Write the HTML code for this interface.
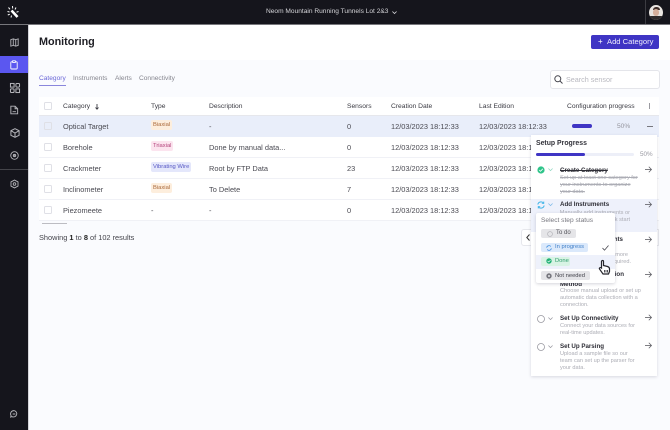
<!DOCTYPE html>
<html><head><meta charset="utf-8">
<style>
html,body{margin:0;padding:0;width:670px;height:430px;overflow:hidden;background:#fafbfe;font-family:"Liberation Sans",sans-serif;color:#3c3c44}
*{box-sizing:border-box}
#w{position:absolute;left:0;top:0;width:670px;height:430px;overflow:hidden;filter:blur(.3px)}
.a{position:absolute;white-space:nowrap}
.t{position:absolute;white-space:nowrap;font-size:7.4px;line-height:10px;color:#4a4a52}
.h{position:absolute;white-space:nowrap;font-size:6.7px;line-height:10px;color:#3a3a42}
.row{position:absolute;left:39px;width:620px;height:21px;background:#fff;border-bottom:1px solid #f0f1f6}
.cb{position:absolute;left:44px;width:8px;height:8px;border:1px solid #dfe0e6;border-radius:1.5px;background:#fff}
.tag{position:absolute;height:10px;line-height:10px;font-size:5.8px;padding:0 2px;border-radius:2px;white-space:nowrap}
.bi{background:#fdeedd;color:#a9683a}.tr{background:#fce4ef;color:#b3447c}.vw{background:#e4e7fb;color:#5657c4}
.st{position:absolute;white-space:nowrap;font-size:6.2px;line-height:9px;font-weight:bold;color:#2e2e36}
.sd{position:absolute;white-space:nowrap;font-size:5.6px;line-height:7px;color:#acadb5}
svg{position:absolute;overflow:visible}
</style></head><body><div id="w">

<div class="a" style="left:0;top:0;width:670px;height:24px;background:#15151c"></div>
<div class="a" style="left:0;top:24px;width:670px;height:1px;background:#77777c"></div>
<div class="a" style="left:0;top:25px;width:28px;height:405px;background:#15151c"></div>
<div class="a" style="left:28px;top:25px;width:1px;height:405px;background:#d5d5da"></div>
<div class="a" style="left:29px;top:25px;width:641px;height:35px;background:#fff"></div>
<div class="a" style="left:0;top:56px;width:28px;height:17px;background:#5b57f0"></div>
<div class="a" style="left:0;top:169px;width:28px;height:1px;background:#44444a"></div>
<div class="a" style="left:645px;top:0;width:1px;height:24px;background:#3c3c42"></div>

<!-- logo -->
<svg style="left:7px;top:6px" width="12" height="12" viewBox="0 0 12 12" fill="none" stroke="#fff">
<path d="M4.5 4.5 L10.500 11" stroke-width="2.600"/><path d="M.5 5.500 L2.500 6M1.500 1.500 L3 3.300M5.500 0 L5.700 2.500M9 1.500 L8 3.500M11.500 5.500 L9.500 6.200M.8 9 L2.800 8.200M4 11.500 L4.500 9.500" stroke-width="1"/>
</svg>
<!-- nav icons -->
<svg style="left:10px;top:38px" width="9" height="9" viewBox="0 0 11 11" fill="none" stroke="#b5b5ba" stroke-width="1.100"><path d="M1 2 L4 1 L7 2 L10 1 V9 L7 10 L4 9 L1 10 Z M4 1 V9 M7 2 V10"/></svg>
<svg style="left:10px;top:60px" width="8" height="10" viewBox="0 0 10 11" fill="none" stroke="#fff" stroke-width="1.100"><rect x="1" y="1.500" width="8" height="9" rx="1"/><rect x="3" y=".3" width="4" height="2" rx=".5" fill="#5b57f0"/></svg>
<svg style="left:9.500px;top:82.500px" width="10" height="10" viewBox="0 0 11 11" fill="none" stroke="#b5b5ba" stroke-width="1.100"><rect x=".5" y=".5" width="4" height="4"/><rect x="6.500" y=".5" width="4" height="4" rx="1"/><rect x=".5" y="6.500" width="4" height="4" rx="1"/><rect x="6.500" y="6.500" width="4" height="4"/></svg>
<svg style="left:10px;top:105px" width="8.500" height="10" viewBox="0 0 10 11" fill="none" stroke="#b5b5ba" stroke-width="1.100"><path d="M1 1 H6 L9 4 V10 H1 Z M6 1 V4 H9 M3 7.500 H7"/></svg>
<svg style="left:9.500px;top:128px" width="10" height="10" viewBox="0 0 11 11" fill="none" stroke="#b5b5ba" stroke-width="1.100"><path d="M5.500 .7 L10 3 V8 L5.500 10.300 L1 8 V3 Z M1 3 L5.500 5.500 L10 3 M5.500 5.500 V10.300"/></svg>
<svg style="left:9.500px;top:151px" width="9" height="9" viewBox="0 0 11 11" fill="none" stroke="#b5b5ba" stroke-width="1.100"><circle cx="5.500" cy="5.500" r="4.600"/><circle cx="5.500" cy="5.500" r="1.500" fill="#8a8a90"/></svg>
<svg style="left:9.500px;top:179px" width="9" height="10" viewBox="0 0 11 11" fill="none" stroke="#b5b5ba" stroke-width="1.100"><path d="M5.500 .7 L9.800 3 V8 L5.500 10.300 L1.200 8 V3 Z"/><circle cx="5.500" cy="5.500" r="1.600"/></svg>
<svg style="left:10px;top:410px" width="8" height="8" viewBox="0 0 9 9" fill="none" stroke="#b5b5ba" stroke-width="1"><path d="M4.500 .7 A3.800 3.600 0 1 1 2 7.400 L.8 8 L1.200 6.200 A3.800 3.600 0 0 1 4.500 .7 Z M3 4.500 H6"/></svg>

<!-- top title -->
<div class="a" style="left:266px;top:7px;font-size:6.600px;line-height:10px;color:#d4d4d8">Neom Mountain Running Tunnels Lot 2&amp;3</div>
<svg style="left:391.500px;top:10.500px" width="5" height="3.500" viewBox="0 0 6 4" fill="none" stroke="#d4d4d8" stroke-width="1"><path d="M.5 .5 L3 3 L5.500 .5"/></svg>
<!-- avatar -->
<div class="a" style="left:649px;top:5px;width:14px;height:15px;border-radius:50%;background:#e9e5e1;overflow:hidden">
<div class="a" style="left:1px;top:11px;width:12px;height:5px;background:#2f2b2b"></div>
<div class="a" style="left:3.500px;top:1.500px;width:7px;height:3px;background:#3e2c28;border-radius:3px 3px 0 0"></div>
<div class="a" style="left:4px;top:4px;width:6px;height:7px;background:#d6b09c;border-radius:3px"></div>
</div>

<div class="a" style="left:39px;top:35px;font-size:10.800px;line-height:15px;font-weight:bold;color:#1e1e24">Monitoring</div>
<div class="a" style="left:591px;top:35px;width:68px;height:14px;background:#3f35c4;border-radius:2px"></div>
<div class="a" style="left:598px;top:37px;font-size:8px;line-height:10px;color:#fff">+</div>
<div class="a" style="left:607px;top:37px;font-size:7.600px;line-height:10px;color:#eceafc">Add Category</div>

<!-- tabs -->
<div class="a" style="left:39px;top:73.500px;font-size:6.600px;line-height:10px;color:#6b67d8">Category</div>
<div class="a" style="left:39px;top:85px;width:27px;height:1px;background:#8a86dc"></div>
<div class="a" style="left:73px;top:73.500px;font-size:6.600px;line-height:10px;color:#85858e">Instruments</div>
<div class="a" style="left:115px;top:73.500px;font-size:6.600px;line-height:10px;color:#85858e">Alerts</div>
<div class="a" style="left:139px;top:73.500px;font-size:6.600px;line-height:10px;color:#85858e">Connectivity</div>

<!-- search -->
<div class="a" style="left:550px;top:70px;width:110px;height:19px;background:#fff;border:1px solid #e4e5ea;border-radius:3px"></div>
<svg style="left:554px;top:75px" width="9" height="9" viewBox="0 0 9 9" fill="none" stroke="#44444c" stroke-width="1"><circle cx="3.800" cy="3.800" r="3"/><path d="M6 6 L8.500 8.500"/></svg>
<div class="a" style="left:566px;top:75px;font-size:7.200px;line-height:10px;color:#b9b9c0">Search sensor</div>

<!-- table -->
<div class="a" style="left:39px;top:97px;width:620px;height:19px;background:#fff;border-bottom:1px solid #e6e7ec"></div>
<div class="row" style="top:116px;background:#e9eefa;border-bottom:0"></div>
<div class="row" style="top:137px"></div>
<div class="row" style="top:158px"></div>
<div class="row" style="top:179px"></div>
<div class="row" style="top:200px"></div>

<div class="cb" style="top:102px"></div><div class="cb" style="top:122px;background:#e9eefa"></div><div class="cb" style="top:143px"></div><div class="cb" style="top:164px"></div><div class="cb" style="top:185px"></div><div class="cb" style="top:206px"></div>

<div class="h" style="left:63px;top:101.500px">Category</div>
<svg style="left:95px;top:103.500px" width="4" height="6" viewBox="0 0 4 6" fill="none" stroke="#3a3a42" stroke-width=".9"><path d="M2 0 V5 M.5 3.500 L2 5.200 L3.500 3.500"/></svg>
<div class="h" style="left:151px;top:101.500px">Type</div>
<div class="h" style="left:209px;top:101.500px">Description</div>
<div class="h" style="left:347px;top:101.500px">Sensors</div>
<div class="h" style="left:391px;top:101.500px">Creation Date</div>
<div class="h" style="left:479px;top:101.500px">Last Edition</div>
<div class="h" style="left:567px;top:101.500px">Configuration progress</div>
<div class="a" style="left:649px;top:103px;width:1px;height:6px;background:#9a9aa0"></div>

<div class="t" style="left:63px;top:121.500px">Optical Target</div>
<div class="t" style="left:63px;top:142.500px">Borehole</div>
<div class="t" style="left:63px;top:163.500px">Crackmeter</div>
<div class="t" style="left:63px;top:184.500px">Inclinometer</div>
<div class="t" style="left:63px;top:205.500px">Piezomeete</div>

<div class="tag bi" style="left:151px;top:120px">Biaxial</div>
<div class="tag tr" style="left:151px;top:141px">Triaxial</div>
<div class="tag vw" style="left:151px;top:162px">Vibrating Wire</div>
<div class="tag bi" style="left:151px;top:183px">Biaxial</div>
<div class="t" style="left:151px;top:205.500px">-</div>

<div class="t" style="left:209px;top:121.500px">-</div>
<div class="t" style="left:209px;top:142.500px">Done by manual data...</div>
<div class="t" style="left:209px;top:163.500px">Root by FTP Data</div>
<div class="t" style="left:209px;top:184.500px">To Delete</div>
<div class="t" style="left:209px;top:205.500px">-</div>

<div class="t" style="left:347px;top:121.500px">0</div>
<div class="t" style="left:347px;top:142.500px">0</div>
<div class="t" style="left:347px;top:163.500px">23</div>
<div class="t" style="left:347px;top:184.500px">7</div>
<div class="t" style="left:347px;top:205.500px">0</div>

<div class="t" style="left:391px;top:121.500px">12/03/2023 18:12:33</div>
<div class="t" style="left:391px;top:142.500px">12/03/2023 18:12:33</div>
<div class="t" style="left:391px;top:163.500px">12/03/2023 18:12:33</div>
<div class="t" style="left:391px;top:184.500px">12/03/2023 18:12:33</div>
<div class="t" style="left:391px;top:205.500px">12/03/2023 18:12:33</div>

<div class="t" style="left:479px;top:121.500px">12/03/2023 18:12:33</div>
<div class="t" style="left:479px;top:142.500px">12/03/2023 18:12:33</div>
<div class="t" style="left:479px;top:163.500px">12/03/2023 18:12:33</div>
<div class="t" style="left:479px;top:184.500px">12/03/2023 18:12:33</div>
<div class="t" style="left:479px;top:205.500px">12/03/2023 18:12:33</div>

<div class="a" style="left:572px;top:124px;width:20px;height:3.500px;background:#3f35c4;border-radius:2px"></div>
<div class="a" style="left:617px;top:121.500px;font-size:6.600px;line-height:10px;color:#95959e">50%</div>
<div class="a" style="left:647px;top:125.500px;width:6px;height:1px;background:#77777e"></div>

<!-- scrollbar + results -->
<div class="a" style="left:42px;top:223px;width:25px;height:1px;background:#bcbcc2"></div>
<div class="a" style="left:39px;top:232px;font-size:7.400px;line-height:11px;color:#44444c">Showing <b style="color:#222">1</b> to <b style="color:#222">8</b> of 102 results</div>

<!-- pagination fragment -->
<div class="a" style="left:521px;top:229px;width:20px;height:17px;background:#fff;border:1px solid #e6e7ec;border-radius:3px"></div>
<svg style="left:526px;top:234px" width="4" height="7" viewBox="0 0 4 7" fill="none" stroke="#333" stroke-width="1"><path d="M3.500 .5 L.8 3.500 L3.500 6.500"/></svg>
<div class="a" style="left:650px;top:229px;width:9px;height:17px;background:#fff;border:1px solid #e6e7ec;border-left:0"></div>

<!-- setup progress panel -->
<div class="a" style="left:531px;top:135px;width:126px;height:241px;background:#fff;box-shadow:0 1px 3px rgba(40,40,70,.16)"></div>
<div class="a" style="left:531px;top:199px;width:126px;height:33px;background:#eef1fb"></div>
<div class="a" style="left:536px;top:138px;font-size:6.900px;line-height:11px;font-weight:bold;color:#33333b">Setup Progress</div>
<div class="a" style="left:536px;top:153px;width:98px;height:3px;background:#edeff8;border-radius:2px"></div>
<div class="a" style="left:536px;top:153px;width:49px;height:3px;background:#3f35c4;border-radius:2px"></div>
<div class="a" style="left:640px;top:150px;font-size:6.300px;line-height:10px;color:#9a9aa2">50%</div>

<!-- step 1 -->
<svg style="left:537px;top:166px" width="8" height="8" viewBox="0 0 8 8"><circle cx="4" cy="4" r="3.600" fill="#2fc48a"/><path d="M2.200 4 L3.500 5.300 L5.800 2.800" fill="none" stroke="#fff" stroke-width=".8"/></svg>
<svg style="left:548px;top:168px" width="5" height="3.500" viewBox="0 0 6 4" fill="none" stroke="#8fd6c0" stroke-width=".9"><path d="M.5 .5 L3 3 L5.500 .5"/></svg>
<div class="st" style="left:560px;top:165.500px;text-decoration:line-through">Create Category</div>
<svg style="left:645px;top:166px" width="7" height="7" viewBox="0 0 7 7" fill="none" stroke="#55555c" stroke-width=".7"><path d="M0 3.500 H6.500 M3.800 .8 L6.500 3.500 L3.800 6.200"/></svg>
<div class="sd" style="left:560px;top:175px;text-decoration:line-through">Set up at least one category for</div>
<div class="sd" style="left:560px;top:182px;text-decoration:line-through">your instruments to organize</div>
<div class="sd" style="left:560px;top:189px;text-decoration:line-through">your data.</div>

<!-- step 2 -->
<svg style="left:537px;top:201px" width="8" height="8" viewBox="0 0 8 8" fill="none" stroke="#3fb4e8" stroke-width="1"><path d="M.8 3.500 A3.300 3.300 0 0 1 6.500 2 M7.200 4.500 A3.300 3.300 0 0 1 1.500 6"/><path d="M6.800 .5 V2.500 H4.800 M1.200 7.500 V5.500 H3.200" stroke-width=".8"/></svg>
<svg style="left:548px;top:203px" width="5" height="3.500" viewBox="0 0 6 4" fill="none" stroke="#7ab8e8" stroke-width=".9"><path d="M.5 .5 L3 3 L5.500 .5"/></svg>
<div class="st" style="left:560px;top:200px">Add Instruments</div>
<svg style="left:645px;top:201px" width="7" height="7" viewBox="0 0 7 7" fill="none" stroke="#55555c" stroke-width=".7"><path d="M0 3.500 H6.500 M3.800 .8 L6.500 3.500 L3.800 6.200"/></svg>
<div class="sd" style="right:40px;top:209.500px">Manually add instruments or</div>
<div class="sd" style="right:40px;top:216.500px">upload a file to quick start</div>

<!-- step 3 -->
<div class="st" style="right:47px;top:235px">Configure Instruments</div>
<svg style="left:645px;top:236px" width="7" height="7" viewBox="0 0 7 7" fill="none" stroke="#55555c" stroke-width=".7"><path d="M0 3.500 H6.500 M3.800 .8 L6.500 3.500 L3.800 6.200"/></svg>
<div class="sd" style="right:42px;top:251.500px">Define or add more</div>
<div class="sd" style="right:39px;top:258.500px">settings as required.</div>

<!-- step 4 -->
<div class="st" style="right:46px;top:269.500px">Data Collection</div>
<div class="st" style="left:560px;top:279.500px">Method</div>
<svg style="left:645px;top:270.500px" width="7" height="7" viewBox="0 0 7 7" fill="none" stroke="#55555c" stroke-width=".7"><path d="M0 3.500 H6.500 M3.800 .8 L6.500 3.500 L3.800 6.200"/></svg>
<div class="sd" style="left:560px;top:288px">Choose manual upload or set up</div>
<div class="sd" style="left:560px;top:295px">automatic data collection with a</div>
<div class="sd" style="left:560px;top:302px">connection.</div>

<!-- step 5 -->
<svg style="left:537px;top:315px" width="8" height="8" viewBox="0 0 8 8" fill="none" stroke="#9a9aa2" stroke-width=".8"><circle cx="4" cy="4" r="3.500"/></svg>
<svg style="left:548px;top:317px" width="5" height="3.500" viewBox="0 0 6 4" fill="none" stroke="#9a9aa2" stroke-width=".9"><path d="M.5 .5 L3 3 L5.500 .5"/></svg>
<div class="st" style="left:560px;top:313.500px">Set Up Connectivity</div>
<svg style="left:645px;top:314px" width="7" height="7" viewBox="0 0 7 7" fill="none" stroke="#55555c" stroke-width=".7"><path d="M0 3.500 H6.500 M3.800 .8 L6.500 3.500 L3.800 6.200"/></svg>
<div class="sd" style="left:560px;top:323px">Connect your data sources for</div>
<div class="sd" style="left:560px;top:330px">real-time updates.</div>

<!-- step 6 -->
<svg style="left:537px;top:343px" width="8" height="8" viewBox="0 0 8 8" fill="none" stroke="#9a9aa2" stroke-width=".8"><circle cx="4" cy="4" r="3.500"/></svg>
<svg style="left:548px;top:345px" width="5" height="3.500" viewBox="0 0 6 4" fill="none" stroke="#9a9aa2" stroke-width=".9"><path d="M.5 .5 L3 3 L5.500 .5"/></svg>
<div class="st" style="left:560px;top:341.500px">Set Up Parsing</div>
<svg style="left:645px;top:342px" width="7" height="7" viewBox="0 0 7 7" fill="none" stroke="#55555c" stroke-width=".7"><path d="M0 3.500 H6.500 M3.800 .8 L6.500 3.500 L3.800 6.200"/></svg>
<div class="sd" style="left:560px;top:351px">Upload a sample file so our</div>
<div class="sd" style="left:560px;top:358px">team can set up the parser for</div>
<div class="sd" style="left:560px;top:365px">your data.</div>

<!-- dropdown -->
<div class="a" style="left:536px;top:213px;width:79px;height:70px;background:#fff;border-radius:2px;box-shadow:0 1px 3px rgba(40,40,70,.2)"></div>
<div class="a" style="left:536px;top:255px;width:79px;height:14px;background:#eef1fb"></div>
<div class="a" style="left:541px;top:215.500px;font-size:6.600px;line-height:10px;color:#77777f">Select step status</div>

<div class="a" style="left:541px;top:229px;width:35px;height:8.500px;background:#e5e5e8;border-radius:2px"></div>
<svg style="left:547px;top:230.500px" width="6" height="6" viewBox="0 0 6 6" fill="none" stroke="#b5b5ba" stroke-width=".7"><circle cx="3" cy="3" r="2.400"/></svg>
<div class="a" style="left:556px;top:229px;font-size:6px;line-height:8px;color:#55555c">To do</div>

<div class="a" style="left:541px;top:243px;width:47px;height:8.500px;background:#dbe9fb;border-radius:2px"></div>
<svg style="left:546px;top:244.500px" width="6" height="6" viewBox="0 0 8 8" fill="none" stroke="#3f8fe0" stroke-width="1"><path d="M.8 3.500 A3.300 3.300 0 0 1 6.500 2 M7.200 4.500 A3.300 3.300 0 0 1 1.500 6"/></svg>
<div class="a" style="left:555px;top:243.300px;font-size:5.800px;line-height:8px;color:#3f7fc8">In progress</div>
<svg style="left:602px;top:245px" width="7" height="6" viewBox="0 0 7 6" fill="none" stroke="#44444c" stroke-width=".8"><path d="M.5 3 L2.500 5.200 L6.500 .5"/></svg>

<div class="a" style="left:541px;top:257px;width:29px;height:8.500px;background:#d8f3e4;border-radius:2px"></div>
<svg style="left:546px;top:258.300px" width="6" height="6" viewBox="0 0 6 6"><circle cx="3" cy="3" r="2.700" fill="#23b277"/><path d="M1.600 3 L2.700 4 L4.500 2.200" fill="none" stroke="#fff" stroke-width=".6"/></svg>
<div class="a" style="left:555px;top:257.300px;font-size:5.800px;line-height:8px;color:#2f9c6c">Done</div>

<div class="a" style="left:541px;top:271px;width:49px;height:9px;background:#e5e5e8;border-radius:2px"></div>
<svg style="left:546px;top:272.500px" width="6" height="6" viewBox="0 0 6 6"><circle cx="3" cy="3" r="2.700" fill="#77777e"/><circle cx="3" cy="3" r="1" fill="#e5e5e8"/></svg>
<div class="a" style="left:555px;top:271.500px;font-size:5.800px;line-height:8px;color:#44444c">Not needed</div>

<!-- hand cursor -->
<svg style="left:598px;top:260px" width="13" height="15" viewBox="0 0 13 15">
<path d="M3.500 1.500 C3.500 .2 5.500 .2 5.500 1.500 V5.500 L9.500 6.500 C11 7 11.500 7.500 11.500 9 V11.500 L10.500 14 H5 L1.500 9 C1 8 2.300 7 3.500 8 Z" fill="#fff" stroke="#26262c" stroke-width="1.200"/>
<path d="M6.500 10 V12.500 M8 10 V12.500 M9.500 10 V12.500" stroke="#26262c" stroke-width=".8"/>
</svg>
</div></body></html>
